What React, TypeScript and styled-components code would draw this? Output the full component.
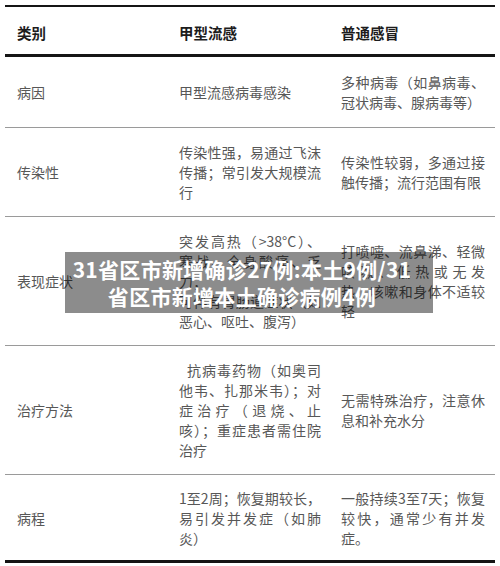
import React from "react";
import styled, { createGlobalStyle } from "styled-components";

const GlobalStyle = createGlobalStyle`
  html, body {
    margin: 0;
    padding: 0;
    background: #fff;
  }
  body {
    font-family: "Noto Sans CJK SC", "Noto Sans", sans-serif;
  }
`;

const Page = styled.div`
  position: relative;
  width: 500px;
  height: 566px;
  padding: 5px 5px 0;
  box-sizing: border-box;
  overflow: hidden;
`;

const Table = styled.table`
  width: 490px;
  border-collapse: separate;
  border-spacing: 0;
  table-layout: fixed;
  font-size: 14px;
  line-height: 20px;
`;

const Col = styled.col<{ $w: number }>`
  width: ${({ $w }) => $w}px;
`;

const Head = styled.th`
  text-align: left;
  font-size: 14.5px;
  font-weight: 700;
  color: #1c1c1c;
  padding: 16px 6px 11px 12px;
  border-top: 2px solid #151515;
  border-bottom: 3px solid #151515;
`;

const Row = styled.tr`
  &:first-child td {
    padding-top: 15px;
    padding-bottom: 15px;
  }
  &:last-child td {
    padding-top: 13px;
    padding-bottom: 12px;
    border-bottom: 3px solid #151515;
  }
`;

const Cell = styled.td`
  vertical-align: middle;
  color: #575757;
  padding: 14px 6px 14px 12px;
  border-bottom: 1px solid #9a9a9a;
`;

// the lines keep the width of the source text, even where a wide line is a few pixels over
const Text = styled.div<{ $w: number }>`
  width: ${({ $w }) => $w}px;
`;

const Line = styled.span<{ $justify: boolean }>`
  display: block;
  text-align: ${({ $justify }) => ($justify ? "justify" : "left")};
  text-align-last: ${({ $justify }) => ($justify ? "justify" : "left")};
  text-justify: inter-character;
`;

const Banner = styled.div`
  position: absolute;
  left: 65px;
  top: 252px;
  width: 368px;
  height: 61px;
  box-sizing: border-box;
  padding-right: 14px;
  background: rgba(0, 0, 0, 0.45);
  display: flex;
  flex-direction: column;
  align-items: center;
  justify-content: center;
  color: #fff;
  font-size: 21px;
  font-weight: 700;
  line-height: 27px;
  letter-spacing: 0.3px;
  white-space: nowrap;
`;

type RowData = { label: string; flu: string[]; cold: string[] };

const rows: RowData[] = [
  {
    label: "病因",
    flu: ["甲型流感病毒感染"],
    cold: ["多种病毒（如鼻病毒、", "冠状病毒、腺病毒等）"],
  },
  {
    label: "传染性",
    flu: ["传染性强，易通过飞沫", "传播；常引发大规模流", "行"],
    cold: ["传染性较弱，多通过接", "触传播；流行范围有限"],
  },
  {
    label: "表现症状",
    flu: ["突发高热（>38°C）、", "寒战、全身酸痛、乏", "力；", "可伴有胃肠道症状（如", "恶心、呕吐、腹泻）"],
    cold: ["打喷嚏、流鼻涕、轻微", "咳嗽、低热或无发", "热、咳嗽和身体不适较", "轻"],
  },
  {
    label: "治疗方法",
    flu: ["\u2002抗病毒药物（如奥司", "他韦、扎那米韦）；对", "症治疗（退烧、止", "咳）；重症患者需住院", "治疗"],
    cold: ["无需特殊治疗，注意休", "息和补充水分"],
  },
  {
    label: "病程",
    flu: ["1至2周；恢复期较长，", "易引发并发症（如肺", "炎）"],
    cold: ["一般持续3至7天；恢复", "较快，通常少有并发", "症。"],
  },
];

// every line but the last is spread to the column edge, like the source
const Lines: React.FC<{ lines: string[]; width: number }> = ({ lines, width }) => (
  <Text $w={width}>
    {lines.map((text, i) => (
      <Line key={i} $justify={i < lines.length - 1 && text !== "力；"}>
        {text}
      </Line>
    ))}
  </Text>
);

export default function App() {
  return (
    <Page>
      <GlobalStyle />
      <Table>
        <colgroup>
          <Col $w={162} />
          <Col $w={162} />
          <Col $w={166} />
        </colgroup>
        <thead>
          <tr>
            <Head>类别</Head>
            <Head>甲型流感</Head>
            <Head>普通感冒</Head>
          </tr>
        </thead>
        <tbody>
          {rows.map((r) => (
            <Row key={r.label}>
              <Cell>{r.label}</Cell>
              <Cell>
                <Lines lines={r.flu} width={142} />
              </Cell>
              <Cell>
                <Lines lines={r.cold} width={144} />
              </Cell>
            </Row>
          ))}
        </tbody>
      </Table>
      <Banner>
        <span>31省区市新增确诊27例:本土9例/31</span>
        <span>省区市新增本土确诊病例4例</span>
      </Banner>
    </Page>
  );
}
